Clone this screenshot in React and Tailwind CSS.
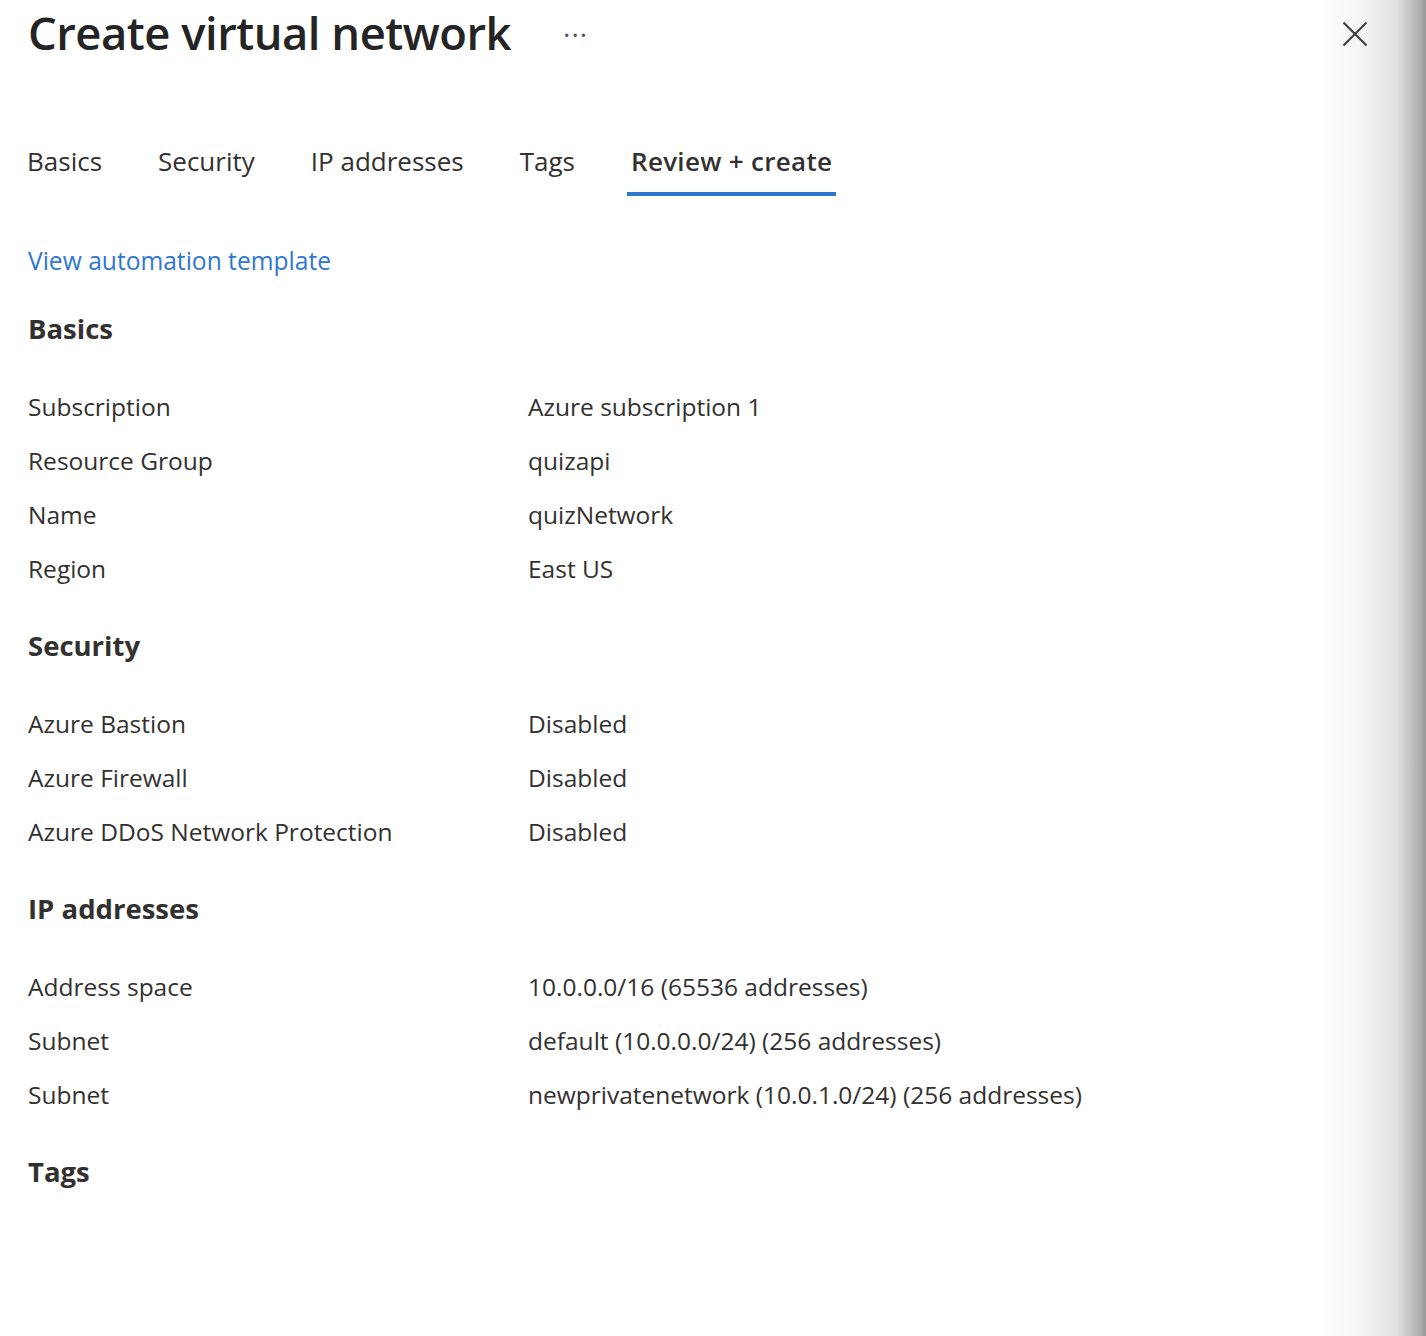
import React from "react";

const tabs = ["Basics", "Security", "IP addresses", "Tags", "Review + create"];

const sections = [
  {
    title: "Basics",
    rows: [
      ["Subscription", "Azure subscription 1"],
      ["Resource Group", "quizapi"],
      ["Name", "quizNetwork"],
      ["Region", "East US"],
    ],
  },
  {
    title: "Security",
    rows: [
      ["Azure Bastion", "Disabled"],
      ["Azure Firewall", "Disabled"],
      ["Azure DDoS Network Protection", "Disabled"],
    ],
  },
  {
    title: "IP addresses",
    rows: [
      ["Address space", "10.0.0.0/16 (65536 addresses)"],
      ["Subnet", "default (10.0.0.0/24) (256 addresses)"],
      ["Subnet", "newprivatenetwork (10.0.1.0/24) (256 addresses)"],
    ],
  },
  { title: "Tags", rows: [] },
];

const Section = ({ title, rows }) => (
  <div className="mt-[30px]">
    <h3 className="h-[40px] leading-[40px] text-[27.5px] font-bold text-[#323130]">
      {title}
    </h3>
    {rows.length > 0 && (
      <div className="mt-[31px]">
        {rows.map(([label, value], i) => (
          <div
            key={i}
            className="grid grid-cols-[500px_1fr] h-[54px] items-center text-[24.5px] text-[#323130]"
          >
            <span>{label}</span>
            <span>{value}</span>
          </div>
        ))}
      </div>
    )}
  </div>
);

const App = () => {
  return (
    <div
      className="min-h-[1336px] w-full bg-[linear-gradient(to_right,#ffffff_92.5%,#f4f4f4_95.5%,#e0e0e0_98%,#b0b0b0_99.5%,#989898)]"
      style={{ fontFamily: '"Open Sans", "Noto Sans", sans-serif' }}
    >
      <div className="flex items-center justify-between h-[68px] pl-[28px] pr-[58px]">
        <div className="flex items-center -mt-[3px]">
          <h1 className="text-[45.4px] font-semibold leading-none text-[#242424] tracking-[-0.5px]">
            Create virtual network
          </h1>
          <span className="ml-[52px] text-[28px] leading-none text-[#555] tracking-[1px] mt-[2px]">
            ···
          </span>
        </div>
        <button type="button" className="w-[26px] h-[26px] flex items-center justify-center">
          <svg width="26" height="26" viewBox="0 0 26 26">
            <path
              d="M1.5 1.5 L24.5 24.5 M24.5 1.5 L1.5 24.5"
              stroke="#3b3b3b"
              strokeWidth="2"
              fill="none"
            />
          </svg>
        </button>
      </div>

      <div className="pl-[23px]">
        <div className="flex gap-[48px] mt-[73px]">
          {tabs.map((t) => {
            const active = t === "Review + create";
            return (
              <div
                key={t}
                className={
                  active
                    ? "h-[55px] px-[4px] pb-[11px] border-b-[4px] border-[#2f76cf] text-[26px] leading-[40px] font-semibold tracking-[0.3px] text-[#323130]"
                    : "h-[55px] px-[4px] pb-[11px] border-b-[4px] border-transparent text-[26px] leading-[40px] text-[#323130]"
                }
              >
                {t}
              </div>
            );
          })}
        </div>
      </div>

      <div className="pl-[28px]">
        <a
          href="#"
          className="block mt-[47px] h-[36px] leading-[36px] text-[24.6px] text-[#2f77d1] w-fit"
        >
          View automation template
        </a>
        <div>
          {sections.map((s) => (
            <Section key={s.title} {...s} />
          ))}
        </div>
      </div>
    </div>
  );
};

export default App;
